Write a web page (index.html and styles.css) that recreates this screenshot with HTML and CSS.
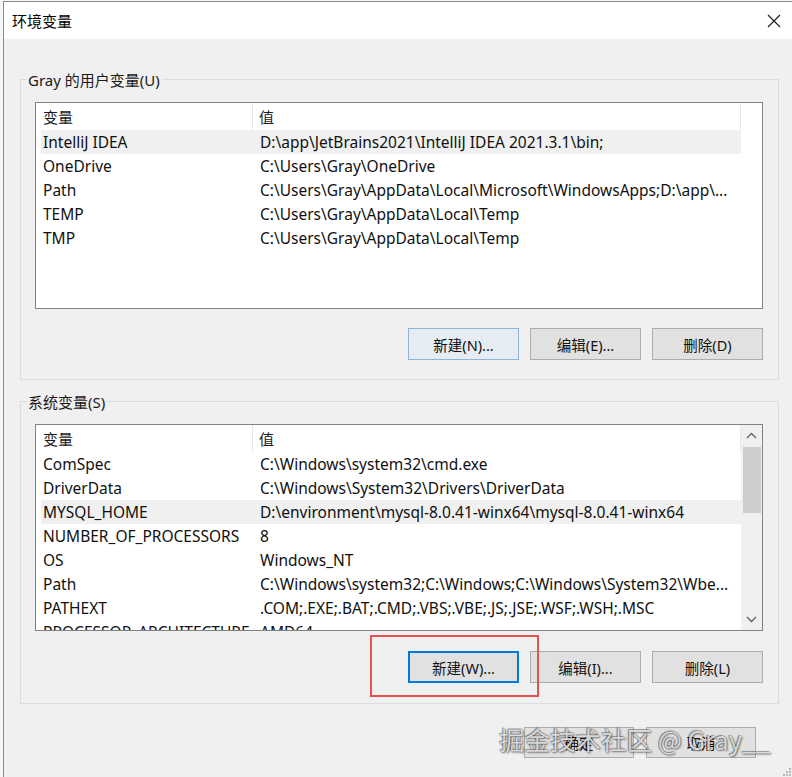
FILE: index.html
```html
<!DOCTYPE html>
<html lang="zh-CN">
<head>
<meta charset="utf-8">
<title>环境变量</title>
<link rel="stylesheet" href="styles.css">
</head>
<body>
<div class="window">
  <div class="titlebar">
    <span class="title">环境变量</span>
    <svg class="close" width="14" height="14" viewBox="0 0 14 14"><path d="M1 1 L13 13 M13 1 L1 13" stroke="#1a1a1a" stroke-width="1.1" fill="none"/></svg>
  </div>
  <div class="content">
    <div class="group user">
      <div class="legend">Gray 的用户变量(U)</div>
      <div class="listbox">
        <div class="list-main">
          <div class="list-header"><div class="hcell c1">变量</div><div class="hcell c2">值</div></div>
          <div class="rows">
            <div class="row selected"><div class="cell c1">IntelliJ IDEA</div><div class="cell c2">D:\app\JetBrains2021\IntelliJ IDEA 2021.3.1\bin;</div></div>
            <div class="row"><div class="cell c1">OneDrive</div><div class="cell c2">C:\Users\Gray\OneDrive</div></div>
            <div class="row"><div class="cell c1">Path</div><div class="cell c2">C:\Users\Gray\AppData\Local\Microsoft\WindowsApps;D:\app\...</div></div>
            <div class="row"><div class="cell c1">TEMP</div><div class="cell c2">C:\Users\Gray\AppData\Local\Temp</div></div>
            <div class="row"><div class="cell c1">TMP</div><div class="cell c2">C:\Users\Gray\AppData\Local\Temp</div></div>
          </div>
        </div>
        <div class="scroll-space"></div>
      </div>
      <div class="btnrow">
        <button class="btn default-soft">新建(N)...</button>
        <button class="btn">编辑(E)...</button>
        <button class="btn">删除(D)</button>
      </div>
    </div>

    <div class="group sys">
      <div class="legend">系统变量(S)</div>
      <div class="listbox">
        <div class="list-main">
          <div class="list-header"><div class="hcell c1">变量</div><div class="hcell c2">值</div></div>
          <div class="rows">
            <div class="row"><div class="cell c1">ComSpec</div><div class="cell c2">C:\Windows\system32\cmd.exe</div></div>
            <div class="row"><div class="cell c1">DriverData</div><div class="cell c2">C:\Windows\System32\Drivers\DriverData</div></div>
            <div class="row selected"><div class="cell c1">MYSQL_HOME</div><div class="cell c2">D:\environment\mysql-8.0.41-winx64\mysql-8.0.41-winx64</div></div>
            <div class="row"><div class="cell c1">NUMBER_OF_PROCESSORS</div><div class="cell c2">8</div></div>
            <div class="row"><div class="cell c1">OS</div><div class="cell c2">Windows_NT</div></div>
            <div class="row"><div class="cell c1">Path</div><div class="cell c2">C:\Windows\system32;C:\Windows;C:\Windows\System32\Wbe...</div></div>
            <div class="row"><div class="cell c1">PATHEXT</div><div class="cell c2">.COM;.EXE;.BAT;.CMD;.VBS;.VBE;.JS;.JSE;.WSF;.WSH;.MSC</div></div>
            <div class="row"><div class="cell c1">PROCESSOR_ARCHITECTURE</div><div class="cell c2">AMD64</div></div>
          </div>
        </div>
        <div class="scrollbar">
          <div class="arrow">
            <svg width="11" height="7" viewBox="0 0 11 7"><path d="M1 6 L5.5 1.5 L10 6" stroke="#606060" stroke-width="1.3" fill="none"/></svg>
          </div>
          <div class="track"><div class="thumb"></div></div>
          <div class="arrow">
            <svg width="11" height="7" viewBox="0 0 11 7"><path d="M1 1 L5.5 5.5 L10 1" stroke="#606060" stroke-width="1.3" fill="none"/></svg>
          </div>
        </div>
      </div>
      <div class="btnrow">
        <button class="btn focused">新建(W)...</button>
        <button class="btn">编辑(I)...</button>
        <button class="btn">删除(L)</button>
      </div>
    </div>

    <div class="footer">
      <button class="btn small">确定</button>
      <button class="btn small">取消</button>
    </div>
  </div>
</div>
<div class="highlight"></div>
<div class="watermark">掘金技术社区 @ Gray__</div>
<svg class="grip" width="8" height="8" viewBox="0 0 8 8">
  <rect x="6" y="0" width="2" height="2" fill="#b8b8b8"/>
  <rect x="3" y="3" width="2" height="2" fill="#b8b8b8"/><rect x="6" y="3" width="2" height="2" fill="#b8b8b8"/>
  <rect x="0" y="6" width="2" height="2" fill="#b8b8b8"/><rect x="3" y="6" width="2" height="2" fill="#b8b8b8"/><rect x="6" y="6" width="2" height="2" fill="#b8b8b8"/>
</svg>
</body>
</html>
```
FILE: styles.css
```css
* { box-sizing: border-box; }
html, body {
  margin: 0;
  padding: 0;
  width: 792px;
  height: 777px;
  overflow: hidden;
  background: #f6f6f6;
  font-family: "Noto Sans", "Noto Sans CJK SC", sans-serif;
  font-size: 14.5px;
  color: #000;
  position: relative;
}
.window {
  margin: 1px 0 0 3px;
  width: 789px;
  height: 776px;
  border-left: 1px solid #8a8a8a;
  border-top: 1px solid #8a8a8a;
  background: #f0f0f0;
}
.titlebar {
  height: 37px;
  background: #fff;
  display: flex;
  align-items: center;
  justify-content: space-between;
  padding: 0 11px 0 8px;
}
.title {
  font-family: "Noto Sans CJK SC", sans-serif;
  font-size: 15px;
  line-height: 20px;
  margin-top: 1px;
}
.close { display: block; margin-top: 1px; }
.content {
  padding: 0 0 0 16px;
}
.group {
  width: 759px;
  border: 1px solid #dcdcdc;
  padding: 0 15px 19px 14px;
}
.group.user { margin-top: 40px; }
.group.sys { margin-top: 21px; padding-bottom: 20px; }
.legend {
  width: fit-content;
  margin: -10px 0 0 -8px;
  padding: 0 2px 0 1px;
  background: #f0f0f0;
  line-height: 20px;
  font-size: 15px;
  color: #1a1a1a;
}
.listbox {
  margin-top: 12px;
  width: 728px;
  height: 207px;
  border: 1px solid #828282;
  background: #fff;
  display: flex;
  overflow: hidden;
}
.list-main {
  width: 705px;
  overflow: hidden;
}
.list-header {
  display: flex;
  height: 27px;
  border-right: 1px solid #e8e8e8;
}
.hcell {
  line-height: 28px;
  color: #1a1a1a;
  font-size: 15px;
}
.hcell.c1 {
  width: 217px;
  padding-left: 7px;
  border-right: 1px solid #e8e8e8;
}
.hcell.c2 { padding-left: 6px; }
.rows { margin-left: 5px; width: 700px; }
.row {
  display: flex;
  height: 24px;
  line-height: 24px;
  white-space: nowrap;
  font-size: 15.5px;
}
.row.selected { background: #f0f0f0; }
.cell { overflow: hidden; color: #111; }
.cell.c1 { width: 212px; padding-left: 2px; }
.cell.c2 {
  width: 486px;
  padding-left: 7px;
  text-overflow: ellipsis;
}
.scroll-space { flex: 1; }
.scrollbar {
  flex: 1;
  background: #f0f0f0;
  display: flex;
  flex-direction: column;
}
.arrow {
  height: 21px;
  display: flex;
  align-items: center;
  justify-content: center;
}
.track { flex: 1; padding: 1px 1px 0 2px; }
.thumb { height: 66px; background: #cdcdcd; }
.btnrow {
  display: flex;
  justify-content: flex-end;
  gap: 11px;
  margin-top: 19px;
}
.sys .btnrow { margin-top: 20px; }
.btn {
  width: 111px;
  height: 32px;
  background: #e1e1e1;
  border: 1px solid #adadad;
  font-family: "Noto Sans", "Noto Sans CJK SC", sans-serif;
  font-size: 14.5px;
  color: #111;
  padding: 0;
  margin: 0;
}
.btn.default-soft {
  background: #e5ecf3;
  border-color: #8eb4d8;
}
.btn.focused {
  border: 2px solid #0078d7;
}
.footer {
  display: flex;
  justify-content: flex-end;
  gap: 12px;
  padding-right: 36px;
  margin-top: 23px;
}
.btn.small { width: 110px; height: 31px; }
.highlight {
  position: absolute;
  left: 370px;
  top: 635px;
  width: 169px;
  height: 62px;
  border: 2px solid #e8514f;
}
.watermark {
  position: absolute;
  left: 499px;
  top: 721px;
  font-family: "Noto Sans CJK SC", sans-serif;
  font-size: 25.5px;
  line-height: 36px;
  white-space: nowrap;
  color: rgba(255, 255, 255, 0.82);
  text-shadow: 0 0 1px rgba(0,0,0,0.7), 1px 1px 2px rgba(0,0,0,0.45), -1px -1px 1px rgba(0,0,0,0.3);
}
.grip {
  position: absolute;
  right: 1px;
  bottom: 1px;
}
```
